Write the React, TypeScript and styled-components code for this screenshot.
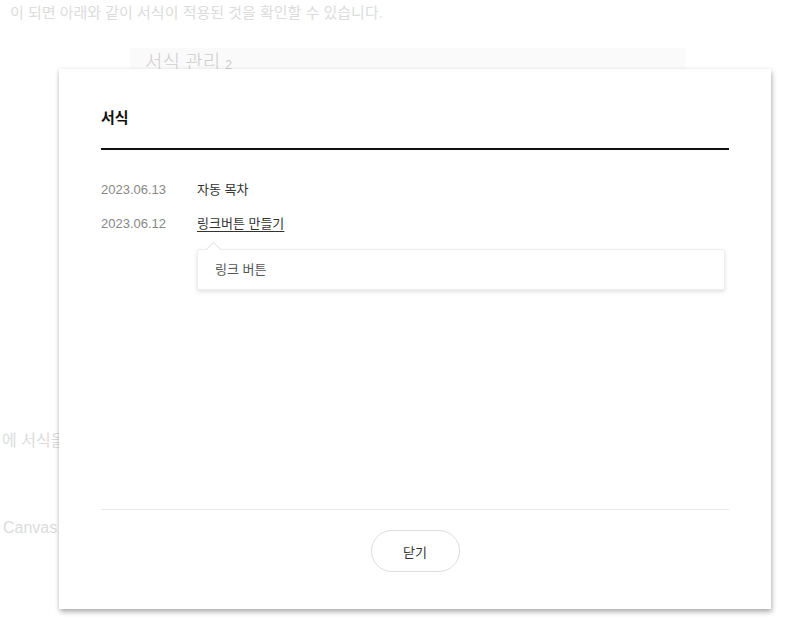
import React from "react"
import styled, { createGlobalStyle } from "styled-components"

const GlobalStyle = createGlobalStyle`
	html, body {
		margin: 0;
		padding: 0;
		background: #fff;
	}
	body {
		font-family: "Liberation Sans", "Noto Sans CJK KR", sans-serif;
		color: #222;
	}
`

const Page = styled.div`
	position: relative;
	width: 786px;
	height: 628px;
	overflow: hidden;
	background: #fff;
`

// faded article behind the modal
const Article = styled.div`
	display: flex;
	flex-direction: column;
	color: #dcdcdc;
	font-size: 15px;
	line-height: 22px;
`

const FadedLine = styled.p<{ $top: number; $indent: number; $size?: number }>`
	margin: ${(p) => p.$top}px 0 0 ${(p) => p.$indent}px;
	font-size: ${(p) => p.$size ?? 15}px;
	white-space: nowrap;
`

const ManageBox = styled.div`
	margin: 24px 0 0 130px;
	width: 555px;
	height: 40px;
	padding: 2px 15px 0;
	box-sizing: border-box;
	background: #fafafb;
	color: #cdcdcd;
	font-size: 19px;
	font-weight: 300;
	line-height: 26px;
`

const Count = styled.span`
	font-size: 12px;
	margin-left: 5px;
`

const Dialog = styled.div`
	position: absolute;
	left: 59px;
	top: 69px;
	width: 712px;
	height: 540px;
	background: #fff;
	box-shadow: 1px 3px 5px rgba(0, 0, 0, 0.3), -1px 0 4px rgba(0, 0, 0, 0.06);
	display: flex;
	flex-direction: column;
	padding: 0 42px;
	box-sizing: border-box;
`

const Header = styled.div`
	padding: 39px 0 20px;
	border-bottom: 2px solid #111;
`

const Title = styled.h2`
	margin: 0;
	font-size: 15px;
	line-height: 20px;
	font-weight: bold;
	color: #111;
`

const Body = styled.div`
	flex: 1;
	display: flex;
	flex-direction: column;
	gap: 14px;
	padding-top: 30px;
`

const Row = styled.div`
	display: grid;
	grid-template-columns: 96px 1fr;
	font-size: 13px;
	line-height: 20px;
`

const Date = styled.span`
	color: #888;
`

const ItemCell = styled.div`
	position: relative;
`

const ItemTitle = styled.span<{ $active?: boolean }>`
	color: #333;
	text-decoration: ${(p) => (p.$active ? "underline" : "none")};
	text-underline-offset: 3px;
`

const Tip = styled.div`
	position: absolute;
	left: 0;
	top: 35px;
	width: 528px;
	height: 41px;
	box-sizing: border-box;
	padding: 0 17px;
	display: flex;
	align-items: center;
	background: #fff;
	border: 1px solid #eee;
	border-radius: 2px;
	box-shadow: 0 2px 4px rgba(0, 0, 0, 0.12);
	color: #555;
	font-size: 13px;

	&::before {
		content: "";
		position: absolute;
		left: 10px;
		top: -6px;
		width: 10px;
		height: 10px;
		background: #fff;
		border-top: 1px solid #e4e4e4;
		border-left: 1px solid #e4e4e4;
		transform: rotate(45deg);
	}
`

const Footer = styled.div`
	border-top: 1px solid #e8e8e8;
	padding: 20px 0 37px;
	display: flex;
	justify-content: center;
`

const CloseButton = styled.button`
	width: 89px;
	height: 42px;
	border: 1px solid #ddd;
	border-radius: 21px;
	background: #fff;
	color: #333;
	font-family: inherit;
	font-size: 13px;
	cursor: pointer;
`

const items = [
	{ date: "2023.06.13", title: "자동 목차" },
	{ date: "2023.06.12", title: "링크버튼 만들기", tip: "링크 버튼" },
]

export default function App() {
	return (
		<Page>
			<GlobalStyle />
			<Article>
				<FadedLine $top={2} $indent={10}>
					이 되면 아래와 같이 서식이 적용된 것을 확인할 수 있습니다.
				</FadedLine>
				<ManageBox>
					서식 관리<Count>2</Count>
				</ManageBox>
				<FadedLine $top={342} $indent={2} $size={16}>
					에 서식을 적용합니다
				</FadedLine>
				<FadedLine $top={65} $indent={3} $size={16}>
					Canvas.
				</FadedLine>
			</Article>

			<Dialog>
				<Header>
					<Title>서식</Title>
				</Header>
				<Body>
					{items.map((it) => (
						<Row key={it.date}>
							<Date>{it.date}</Date>
							<ItemCell>
								<ItemTitle $active={!!it.tip}>{it.title}</ItemTitle>
								{it.tip && <Tip>{it.tip}</Tip>}
							</ItemCell>
						</Row>
					))}
				</Body>
				<Footer>
					<CloseButton>닫기</CloseButton>
				</Footer>
			</Dialog>
		</Page>
	)
}
